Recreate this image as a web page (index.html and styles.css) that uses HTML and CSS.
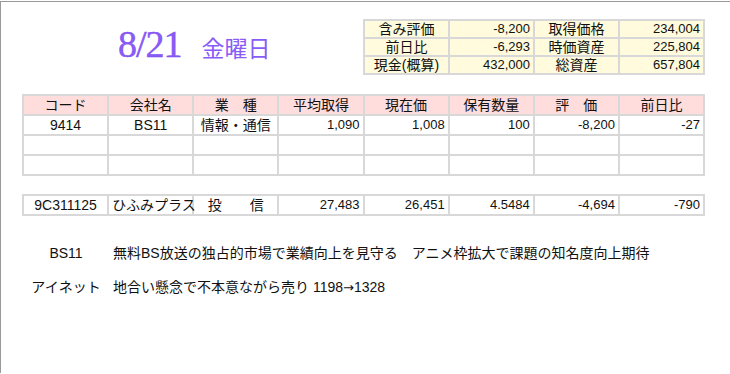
FILE: index.html
```html
<!DOCTYPE html>
<html lang="ja">
<head>
<meta charset="utf-8">
<link rel="stylesheet" href="styles.css">
</head>
<body>
<div class="page">
  <header class="top">
    <div class="date"><span class="md">8/21</span><span class="dow">金曜日</span></div>
    <table class="summary">
      <tr><td class="lbl">含み評価</td><td class="num">-8,200</td><td class="lbl">取得価格</td><td class="num">234,004</td></tr>
      <tr><td class="lbl">前日比</td><td class="num">-6,293</td><td class="lbl">時価資産</td><td class="num">225,804</td></tr>
      <tr><td class="lbl">現金(概算)</td><td class="num">432,000</td><td class="lbl">総資産</td><td class="num">657,804</td></tr>
    </table>
  </header>

  <table class="grid holdings">
    <tr class="head"><td>コード</td><td>会社名</td><td>業　種</td><td>平均取得</td><td>現在価</td><td>保有数量</td><td>評　価</td><td>前日比</td></tr>
    <tr><td class="c">9414</td><td class="c">BS11</td><td class="c">情報・通信</td><td class="num">1,090</td><td class="num">1,008</td><td class="num">100</td><td class="num">-8,200</td><td class="num">-27</td></tr>
    <tr><td></td><td></td><td></td><td></td><td></td><td></td><td></td><td></td></tr>
    <tr><td></td><td></td><td></td><td></td><td></td><td></td><td></td><td></td></tr>
  </table>

  <table class="grid fund">
    <tr><td class="c">9C311125</td><td class="c">ひふみプラス</td><td class="c">投　　信</td><td class="num">27,483</td><td class="num">26,451</td><td class="num">4.5484</td><td class="num">-4,694</td><td class="num">-790</td></tr>
  </table>

  <div class="notes">
    <div class="who">BS11</div><div class="what">無料BS放送の独占的市場で業績向上を見守る　アニメ枠拡大で課題の知名度向上期待</div>
    <div class="who">アイネット</div><div class="what">地合い懸念で不本意ながら売り 1198<span class="arrow">→</span>1328</div>
  </div>
</div>
</body>
</html>
```

FILE: styles.css
```css
html, body {
  margin: 0;
  padding: 0;
  background: #fff;
}
body {
  font-family: "Liberation Sans", "Noto Sans CJK JP", sans-serif;
  font-size: 13px;
  color: #111;
}
.page {
  margin-top: 1px;
  border-top: 1px solid #9a9a9a;
  border-left: 1px solid #9a9a9a;
  min-height: 372px;
  box-sizing: border-box;
  padding-left: 21px;
}
.top {
  display: flex;
  align-items: flex-start;
  height: 91px;
}
.date {
  margin-left: 96px;
  margin-top: 20px;
  color: #8a5cf6;
  display: flex;
  align-items: baseline;
  width: 245px;
}
.md {
  font-family: "Liberation Serif", serif;
  font-size: 38px;
  letter-spacing: -1px;
  -webkit-text-stroke: 0.4px #7a44f0;
}
.dow {
  font-family: "Noto Sans CJK JP", sans-serif;
  font-size: 23px;
  margin-left: 20px;
}
table {
  border-collapse: collapse;
}
td {
  border: 2px solid #d8d8d8;
  padding: 0 3px;
  height: 18px;
  line-height: 18px;
  white-space: nowrap;
}
.summary {
  margin-top: 17px;
  background: #fffbdc;
}
.summary td {
  width: 77px;
  height: 16px;
  line-height: 16px;
}
.summary .lbl {
  text-align: center;
  font-size: 14px;
}
.num {
  text-align: right;
}
.c {
  text-align: center;
}
.grid {
  width: 683px;
  table-layout: fixed;
}
.holdings {
  margin-top: 1px;
}
.head td {
  background: #ffdddd;
  text-align: center;
  font-size: 14px;
}
.fund {
  margin-top: 18px;
}
.grid .c {
  font-size: 14px;
}
.notes {
  display: grid;
  grid-template-columns: 80px auto;
  column-gap: 7px;
  row-gap: 14px;
  margin-top: 27px;
  margin-left: 4px;
  line-height: 20px;
  font-size: 14px;
}
.who {
  text-align: center;
}
.arrow {
  font-family: "DejaVu Sans", sans-serif;
  font-size: 13px;
}
```
